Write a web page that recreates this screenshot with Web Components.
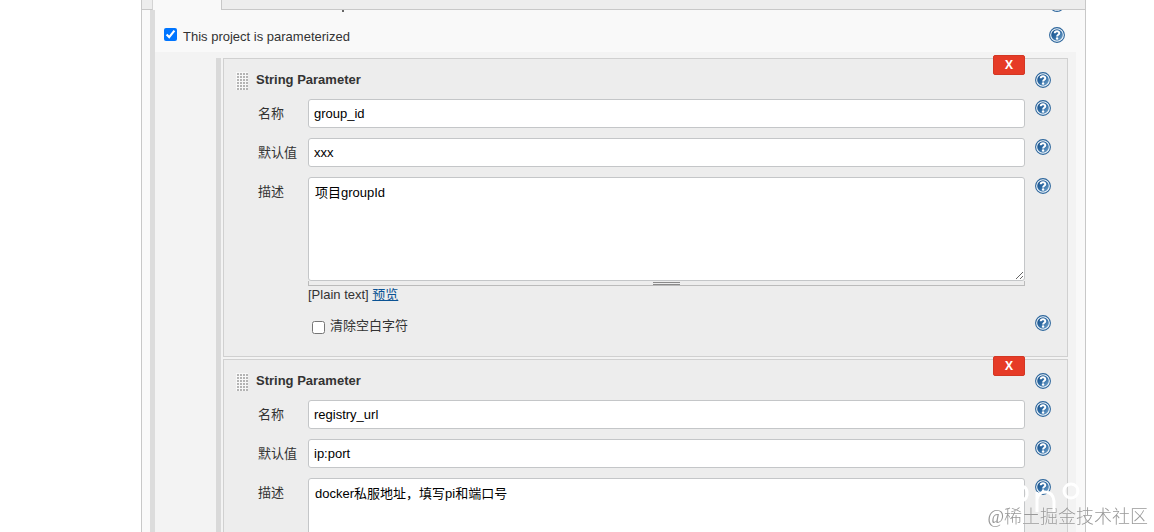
<!DOCTYPE html>
<html lang="zh-CN">
<head>
<meta charset="utf-8">
<title>Config</title>
<style>
  body {
    margin: 0;
    height: 100vh;
    overflow: hidden;
    background: #fff;
    color: #333;
    font: 13px/16px "Liberation Sans", "Noto Sans CJK SC", sans-serif;
  }
</style>
</head>
<body>
<config-page>
  <check-option label="This project is parameterized" checked></check-option>
  <param-list>
    <param-panel heading="String Parameter">
      <text-entry label="名称" value="group_id"></text-entry>
      <text-entry label="默认值" value="xxx"></text-entry>
      <text-block label="描述" value="项目groupId" preview></text-block>
      <trim-option label="清除空白字符"></trim-option>
    </param-panel>
    <param-panel heading="String Parameter">
      <text-entry label="名称" value="registry_url"></text-entry>
      <text-entry label="默认值" value="ip:port"></text-entry>
      <text-block label="描述" value="docker私服地址，填写pi和端口号"></text-block>
    </param-panel>
  </param-list>
</config-page>
<page-watermark></page-watermark>

<script>
// Shared by every form row: label column, field column, help column
const rowStyle = `
  :host {
    display: flex;
    align-items: flex-start;
    margin-bottom: 10px;
  }
  .label {
    flex: none;
    width: 50px;
    line-height: 29px;
  }
  .field {
    flex: 1;
    min-width: 0;
  }
  help-button {
    margin: 1px 16px 0 10px;
  }
  input[type="text"], textarea {
    display: block;
    box-sizing: border-box;
    width: 100%;
    margin: 0;
    border: 1px solid #c4c6c8;
    border-radius: 3px;
    background: #fff;
    color: #000;
    font: inherit;
    outline: none;
  }
`;

class HelpButton extends HTMLElement {
  constructor() {
    super();
    this.attachShadow({ mode: "open" });
  }

  connectedCallback() {
    this.shadowRoot.innerHTML = `
      <style>
        :host {
          display: block;
          flex: none;
          width: 16px;
          height: 16px;
        }
        button {
          display: block;
          padding: 0;
          border: none;
          background: none;
          cursor: pointer;
        }
        svg {
          display: block;
        }
      </style>
      <button type="button" aria-label="Help">
        <svg width="16" height="16" viewBox="0 0 16 16">
          <defs>
            <linearGradient id="fill" x1="0" y1="0" x2="1" y2="1">
              <stop offset="0" stop-color="#124a84"/>
              <stop offset=".5" stop-color="#2f6ca5"/>
              <stop offset="1" stop-color="#7fabcf"/>
            </linearGradient>
          </defs>
          <circle cx="8" cy="8" r="7.4" fill="#f4f9fd" stroke="#2c659b" stroke-width="1.1"/>
          <circle cx="8" cy="8" r="5.8" fill="url(#fill)"/>
          <path d="M5.7 6.3C5.8 3.6 10.3 3.6 10.3 6.2C10.3 7.8 8.1 7.7 8.1 9.4" fill="none" stroke="#fff" stroke-width="2"/>
          <circle cx="8.1" cy="11.5" r="1.2" fill="#fff"/>
        </svg>
      </button>
    `;
  }
}

class ConfigPage extends HTMLElement {
  constructor() {
    super();
    this.attachShadow({ mode: "open" });
    this.shadowRoot.innerHTML = `
      <style>
        :host {
          display: flex;
          flex-direction: column;
          box-sizing: border-box;
          height: 100%;
          margin: 0 68px 0 141px;
          border: solid #c8c8c8;
          border-width: 0 1px;
          background: #f9f9f9;
          overflow: hidden;
        }
        .tabs {
          flex: none;
          display: flex;
          justify-content: space-between;
          height: 10px;
        }
        .before, .after {
          box-sizing: border-box;
          border-bottom: 1px solid #c8c8c8;
          background: #ededed;
        }
        .before {
          width: 11px;
          border-right: 1px solid #d4d4d4;
        }
        .after {
          flex: 1;
          margin-left: 68px;
          border-left: 1px solid #c8c8c8;
        }
        .content {
          flex: none;
          margin-left: 8px;
          border-left: 5px solid #dcdcdc;
        }
        /* bottom edge of the row scrolled under the tab bar */
        .scrolled {
          display: flex;
          align-items: flex-end;
          justify-content: space-between;
          height: 2px;
          padding: 0 20px 0 187px;
          overflow: hidden;
        }
        .tail {
          width: 2px;
          height: 2px;
          background: #666;
        }
      </style>
      <div class="tabs"><div class="before"></div><div class="after"></div></div>
      <div class="content">
        <div class="scrolled"><span class="tail"></span><help-button></help-button></div>
        <slot></slot>
      </div>
    `;
  }
}

class CheckOption extends HTMLElement {
  constructor() {
    super();
    this.attachShadow({ mode: "open" });
  }

  connectedCallback() {
    this.shadowRoot.innerHTML = `
      <style>
        :host {
          display: flex;
          align-items: flex-start;
          height: 25px;
          padding: 15px 20px 0 9px;
        }
        input {
          width: 13px;
          height: 13px;
          margin: 1px 6px 0 0;
        }
        label {
          flex: 1;
          padding-top: 2px;
        }
      </style>
      <input type="checkbox" id="check" ${this.hasAttribute("checked") ? "checked" : ""}>
      <label for="check">${this.getAttribute("label")}</label>
      <help-button></help-button>
    `;
  }
}

class ParamList extends HTMLElement {
  constructor() {
    super();
    this.attachShadow({ mode: "open" });
    this.shadowRoot.innerHTML = `
      <style>
        :host {
          display: block;
          margin-right: 9px;
          padding: 6px 8px 0 61px;
          background: #f3f3f3;
        }
        .list {
          display: flex;
          flex-direction: column;
          gap: 2px;
          padding-left: 2px;
          border-left: 5px solid #d9d9d9;
        }
      </style>
      <div class="list"><slot></slot></div>
    `;
  }
}

class ParamPanel extends HTMLElement {
  constructor() {
    super();
    this.attachShadow({ mode: "open" });
  }

  connectedCallback() {
    this.shadowRoot.innerHTML = `
      <style>
        :host {
          display: block;
          position: relative;
          padding-bottom: 10px;
          border: 1px solid #d0d0d0;
          background: #ededed;
        }
        header {
          display: flex;
          height: 27px;
          padding: 13px 16px 0 12px;
        }
        .grip {
          width: 12px;
          height: 18px;
          margin-right: 8px;
          background: #f8f8f8 radial-gradient(circle at 2px 2px, #b4b4b4 1px, transparent 1px) 0 0 / 3px 3px;
        }
        h3 {
          flex: 1;
          margin: 0;
          font-size: 13px;
          line-height: 16px;
        }
        /* sits on the top border of the panel */
        .delete {
          position: absolute;
          top: -4px;
          right: 42px;
          width: 32px;
          height: 20px;
          padding: 0;
          border: 1px solid #d33724;
          border-radius: 2px;
          background: #e63b27;
          color: #fff;
          font: bold 12px/16px "Open Sans", sans-serif;
          cursor: pointer;
        }
        .rows {
          padding-left: 34px;
        }
      </style>
      <header>
        <span class="grip"></span>
        <h3>${this.getAttribute("heading")}</h3>
        <help-button></help-button>
      </header>
      <button type="button" class="delete">X</button>
      <div class="rows"><slot></slot></div>
    `;
    this.shadowRoot.querySelector(".delete").addEventListener("click", () => this.remove());
  }
}

class TextEntry extends HTMLElement {
  constructor() {
    super();
    this.attachShadow({ mode: "open" });
  }

  connectedCallback() {
    this.shadowRoot.innerHTML = `
      <style>
        ${rowStyle}
        input[type="text"] {
          height: 29px;
          padding: 0 5px;
        }
      </style>
      <label class="label" for="field">${this.getAttribute("label")}</label>
      <div class="field"><input type="text" id="field" value="${this.getAttribute("value")}"></div>
      <help-button></help-button>
    `;
  }
}

class TextBlock extends HTMLElement {
  constructor() {
    super();
    this.attachShadow({ mode: "open" });
  }

  connectedCallback() {
    const preview = `<div class="preview">[Plain text] <a href="#preview">预览</a></div>`;

    this.shadowRoot.innerHTML = `
      <style>
        ${rowStyle}
        textarea {
          height: 104px;
          padding: 7px 6px;
          resize: vertical;
        }
        .handle {
          display: flex;
          align-items: flex-end;
          justify-content: center;
          box-sizing: border-box;
          height: 5px;
          border: solid #bbb;
          border-width: 0 1px 1px;
        }
        .handle span {
          box-sizing: border-box;
          width: 27px;
          height: 3px;
          border: solid #8a8a8a;
          border-width: 1px 0;
        }
        .preview {
          line-height: 18px;
        }
        a {
          color: #0b5394;
        }
      </style>
      <label class="label" for="field">${this.getAttribute("label")}</label>
      <div class="field">
        <textarea id="field">${this.getAttribute("value")}</textarea>
        <div class="handle"><span></span></div>
        ${this.hasAttribute("preview") ? preview : ""}
      </div>
      <help-button></help-button>
    `;
  }
}

class TrimOption extends HTMLElement {
  constructor() {
    super();
    this.attachShadow({ mode: "open" });
  }

  connectedCallback() {
    this.shadowRoot.innerHTML = `
      <style>
        ${rowStyle}
        :host {
          height: 22px;
        }
        .field {
          display: flex;
          padding-left: 54px;
        }
        input {
          width: 13px;
          height: 13px;
          margin: 7px 5px 0 0;
        }
        label {
          line-height: 24px;
        }
      </style>
      <div class="field">
        <input type="checkbox" id="trim">
        <label for="trim">${this.getAttribute("label")}</label>
      </div>
      <help-button></help-button>
    `;
  }
}

class PageWatermark extends HTMLElement {
  constructor() {
    super();
    this.attachShadow({ mode: "open" });
    this.shadowRoot.innerHTML = `
      <style>
        :host {
          position: fixed;
          right: 6px;
          bottom: 3px;
          color: #999;
          font: 300 18px/24px "Liberation Serif", "Noto Sans CJK SC", serif;
          text-shadow: 0 0 1px #fff;
          pointer-events: none;
        }
        svg {
          position: absolute;
          right: 42px;
          bottom: 13px;
        }
      </style>
      <svg width="100" height="38" viewBox="0 0 100 38" fill="none" stroke="#fff" stroke-width="3">
        <path d="M10 8Q22 6 21 17Q20 24 10 24"/>
        <path d="M31 34V14M31 21Q33 14 39 14Q47 14 48 23V34"/>
        <circle cx="65" cy="13" r="7"/>
      </svg>
      <span>@稀土掘金技术社区</span>
    `;
  }
}

customElements.define("help-button", HelpButton);
customElements.define("config-page", ConfigPage);
customElements.define("check-option", CheckOption);
customElements.define("param-list", ParamList);
customElements.define("param-panel", ParamPanel);
customElements.define("text-entry", TextEntry);
customElements.define("text-block", TextBlock);
customElements.define("trim-option", TrimOption);
customElements.define("page-watermark", PageWatermark);
</script>
</body>
</html>
